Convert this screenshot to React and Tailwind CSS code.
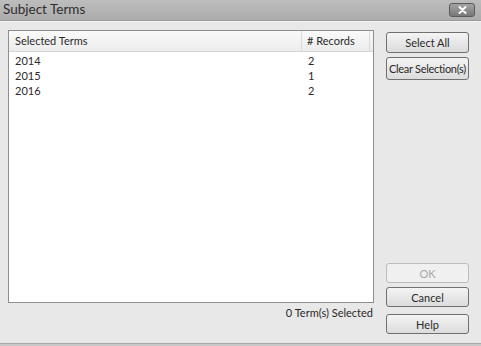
import React from 'react'

const rows = [
  { term: "2014", count: 2 },
  { term: "2015", count: 1 },
  { term: "2016", count: 2 },
]

const Btn = ({ children, disabled, className = "" }) => (
  <button
    disabled={disabled}
    className={
      "w-[83px] rounded-[3px] border text-[11px] leading-none whitespace-nowrap flex items-center justify-center " +
      (disabled
        ? "border-[#bcbcbc] bg-[#f0f0f0] text-[#a8a8a8] "
        : "border-[#707070] bg-gradient-to-b from-[#f4f4f4] to-[#dcdcdc] text-[#2a2a2a] ") +
      className
    }
  >
    {children}
  </button>
)

const App = () => {
  return (
    <div
      className="w-[481px] h-[346px] flex flex-col bg-[#e8e8e8] overflow-hidden"
      style={{ fontFamily: 'Lato, "Noto Sans", sans-serif' }}
    >
      {/* title bar */}
      <div className="h-[21px] flex items-center justify-between bg-gradient-to-b from-[#bdbdbd] to-[#acacac] border-b border-[#9a9a9a]">
        <span className="pl-[3px] text-[13.5px] text-[#2e2e2e] leading-none">Subject Terms</span>
        <div className="mr-[6px] w-[26px] h-[14px] rounded-[3px] border border-[#5a5a5a] bg-gradient-to-b from-[#a4a4a4] to-[#787878] flex items-center justify-center">
          <svg width="9" height="8" viewBox="0 0 9 8">
            <path d="M1.5 1 L7.5 7 M7.5 1 L1.5 7" stroke="#fff" strokeWidth="2" strokeLinecap="round" />
          </svg>
        </div>
      </div>

      {/* body */}
      <div className="flex-1 flex border-t border-[#f4f4f4]">
        <div className="ml-[8px] pt-[8px] w-[366px] flex flex-col">
          <div className="h-[273px] border border-[#8e8e8e] bg-white flex flex-col">
            <div className="h-[21px] flex bg-gradient-to-b from-[#fafafa] to-[#ececec] border-b border-[#d5d5d5] text-[11px] text-[#2a2a2a]">
              <div className="w-[293px] border-r border-[#dadada] pl-[6px] flex items-center">Selected Terms</div>
              <div className="w-[68px] border-r border-[#dadada] pl-[5px] flex items-center"># Records</div>
            </div>
            <div className="pt-[2px]">
              {rows.map((r) => (
                <div key={r.term} className="h-[15px] flex items-center text-[11px] text-[#2a2a2a]">
                  <div className="w-[293px] pl-[6px]">{r.term}</div>
                  <div className="pl-[6px]">{r.count}</div>
                </div>
              ))}
            </div>
          </div>
          <div className="mt-[3px] text-right pr-[1px] text-[11px] text-[#2a2a2a] leading-[14px]">0 Term(s) Selected</div>
        </div>

        <div className="ml-[12px] pt-[10px] pb-[9px] flex flex-col">
          <Btn className="h-[21px]">Select All</Btn>
          <Btn className="h-[23px] mt-[4px] tracking-[-0.3px]">Clear Selection(s)</Btn>
          <div className="flex-1" />
          <Btn disabled className="h-[20px]">OK</Btn>
          <Btn className="h-[20px] mt-[4px]">Cancel</Btn>
          <Btn className="h-[20px] mt-[7px]">Help</Btn>
        </div>
      </div>

      <div className="h-[3px] border-t border-[#a8a8a8] bg-[#c8c8c8]" />
    </div>
  )
}

export default App
